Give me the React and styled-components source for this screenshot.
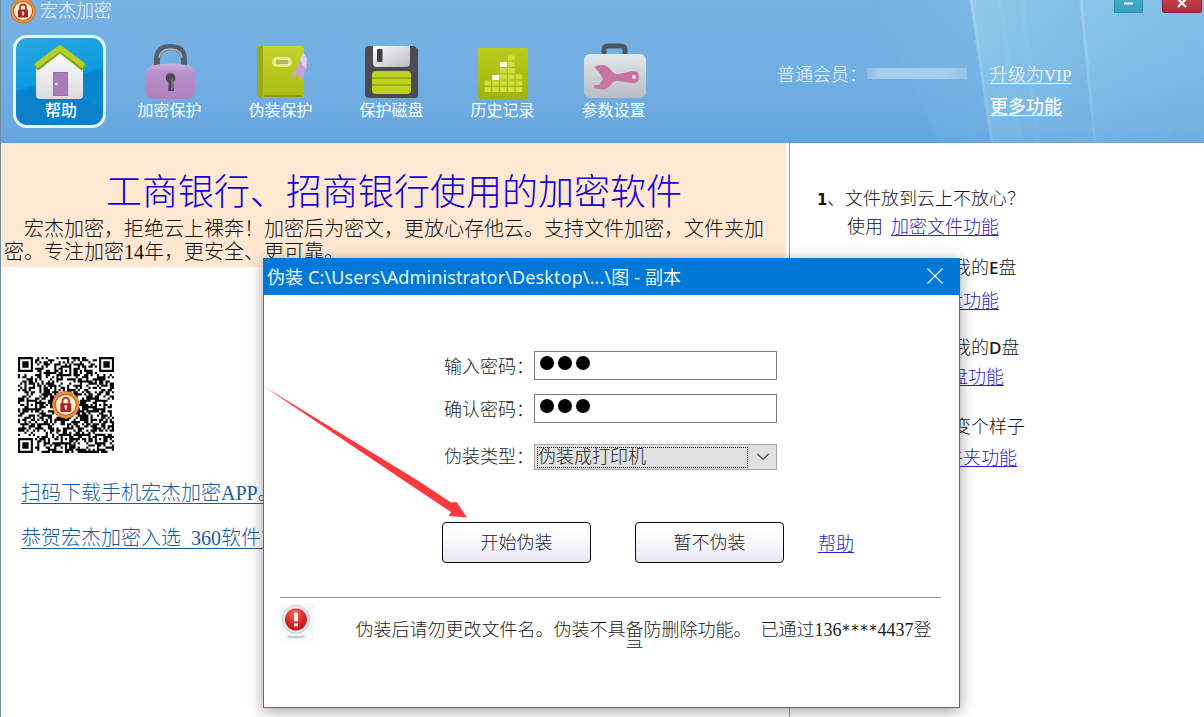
import React, { useState } from 'react';
import styled, { createGlobalStyle } from 'styled-components';

const GlobalStyle = createGlobalStyle`
  * {
    box-sizing: border-box;
  }

  body {
    margin: 0;
    overflow: hidden;
    background: #fff;
    font-family: 'Liberation Serif', 'Noto Sans CJK SC', sans-serif;
    font-weight: 300;
  }
`;

const Window = styled.div`
  position: relative;
  display: flex;
  flex-direction: column;
  width: 1204px;
  height: 717px;
  overflow: hidden;
  background: #fff;
  border-left: 1px solid #6f8f9f;
`;

const Header = styled.header`
  position: relative;
  height: 143px;
  flex: none;
  background: linear-gradient(#76b1e3 0%, #73afe2 45%, #68a8df 92%, #62a6e4 98%, #5f9dd4 100%);
`;

const Streaks = styled.svg`
  position: absolute;
  top: 0;
  right: 0;
`;

const TitleBar = styled.div`
  position: relative;
  display: flex;
  align-items: flex-start;
  height: 35px;
  padding-left: 9px;
`;

const AppName = styled.span`
  flex: 1;
  margin-left: 4px;
  color: #eef8ff;
  font-size: 18px;
  line-height: 22px;
`;

const MinimizeButton = styled.button`
  display: flex;
  justify-content: center;
  width: 29px;
  height: 13px;
  margin-right: 19px;
  padding: 2px 0 0;
  border: 1px solid #2c8fb0;
  border-top: 0;
  background: linear-gradient(#43a9c4, #38a3c4);
`;

const CloseButton = styled(MinimizeButton)`
  width: 40px;
  margin-right: 2px;
  padding: 0;
  border-color: #8c2231;
  border-radius: 0 0 3px 3px;
  background: linear-gradient(#c9404a, #ab2b3c);
`;

const HeaderRow = styled.div`
  position: relative;
  display: flex;
  justify-content: space-between;
`;

const Toolbar = styled.nav`
  display: flex;
  gap: 18px;
  padding-left: 12px;
`;

const ToolButton = styled.div`
  display: flex;
  flex-direction: column;
  align-items: center;
  width: 93px;
  height: 93px;
  border-radius: 14px;
  border: 3px solid ${({ $active }) => ($active ? '#e9f6ff' : 'transparent')};
  background: ${({ $active }) =>
    $active
      ? 'radial-gradient(ellipse 120px 60px at 30% 105%, #0a7fca 0 60%, transparent 61%), linear-gradient(165deg, #2aa6e0 0%, #0c9ce0 46%, #0683cd 50%, #0a8cd6 100%)'
      : 'none'};
  background-clip: padding-box;
`;

const ToolIcon = styled.svg`
  width: 87px;
  height: 63px;
  flex: none;
`;

const ToolLabel = styled.span`
  margin-left: ${({ $active }) => ($active ? '3px' : '-2px')};
  color: #f4fbff;
  font-size: 16px;
  font-weight: ${({ $active }) => ($active ? 500 : 400)};
  line-height: 19px;
  white-space: nowrap;
`;

const Member = styled.div`
  display: grid;
  grid-template-columns: 90px 123px auto;
  align-content: start;
  width: 427px;
  padding-top: 29px;
  row-gap: 9px;
  color: #e9f5ff;
  font-size: 18px;
  line-height: 22px;
`;

const MaskedName = styled.span`
  width: 100px;
  height: 11px;
  margin-top: 4px;
  background: linear-gradient(90deg, #8bbde8, #a9cdee 12%, #a9cdee 80%, #92c2ea);
`;

const Link = styled.a`
  text-decoration: underline 1px;
  text-underline-offset: 2px;
  text-decoration-skip-ink: none;
`;

const HeaderLink = styled(Link)`
  grid-column: 3;
  justify-self: start;
  color: #f2faff;
  font-weight: ${({ $bold }) => ($bold ? 500 : 300)};
`;

const Vip = styled.span`
  font-size: 17px;
`;

const Content = styled.main`
  display: flex;
  flex: 1;
`;

const LeftPane = styled.section`
  width: 789px;
  padding-right: 3px;
  border-right: 1px solid #9a9aa4;
`;

const Banner = styled.div`
  height: 124px;
  padding: 27px 0 0 3px;
  background: #fee8d2;
`;

const BannerTitle = styled.h1`
  margin: 0 0 2px 102px;
  color: #1400d8;
  font-size: 36px;
  font-weight: 300;
  line-height: 46px;
  white-space: nowrap;
`;

const BannerText = styled.p`
  margin: 0;
  color: #111;
  font-size: 20px;
  line-height: 23px;
  text-indent: 20px;
  white-space: nowrap;
`;

const QrCode = styled.svg`
  display: block;
  margin: 90px 0 0 17px;
`;

const PromoLink = styled.a`
  display: table;
  margin: ${({ $top }) => $top}px 0 0 20px;
  color: #1b5c9f;
  border-bottom: 1px solid #1b5c9f;
  font-size: 20px;
  line-height: 19px;
  white-space: pre;
`;

const RightPane = styled.aside`
  flex: 1;
  padding: 45px 0 0 27px;
`;

const Tip = styled.div`
  height: ${({ $height }) => $height}px;
  color: #151515;
  font-size: 18px;
  line-height: 22px;
  white-space: nowrap;
`;

const TipNumber = styled.b`
  display: inline-block;
  width: 10px;
  font: bold 15px/22px 'DejaVu Sans', sans-serif;
`;

const Letter = styled.span`
  font-family: 'Noto Sans', sans-serif;
  font-size: 17px;
  font-weight: 500;
`;

const TipAction = styled.div`
  display: flex;
  gap: ${({ $gap }) => $gap || 8}px;
  margin-top: ${({ $top }) => $top}px;
  padding-left: 30px;
`;

const BlueLink = styled(Link)`
  color: #2a1fc4;
  font-size: 18px;
`;

const Dialog = styled.div`
  position: absolute;
  left: 262px;
  top: 258px;
  width: 697px;
  height: 450px;
  border: 1px solid #1c7fb8;
  background: #fff;
  box-shadow: 0 3px 14px rgba(0, 0, 0, 0.38);
`;

const DialogTitle = styled.div`
  display: flex;
  align-items: center;
  justify-content: space-between;
  height: 37px;
  margin: -1px -1px 0;
  padding: 0 17px 2px 4px;
  background: #0078d7;
  color: #e8f5ff;
  font-family: 'Noto Sans', 'Noto Sans CJK SC', sans-serif;
  font-size: 18px;
  font-weight: 400;
  letter-spacing: 0.12px;
  white-space: pre;
`;

const Form = styled.div`
  display: grid;
  grid-template-columns: 90px 243px;
  grid-template-rows: 43px 50px 26px;
  align-items: start;
  padding: 56px 0 0 180px;
`;

const Label = styled.label`
  color: #222;
  font-size: 18px;
  line-height: ${({ $height }) => $height || 33}px;
  white-space: nowrap;
`;

const PasswordField = styled.div`
  display: flex;
  gap: 4px;
  height: 29px;
  padding: 4px 0 0 5px;
  border: 1px solid #7a7a7a;
`;

const Dot = styled.span`
  width: 14px;
  height: 14px;
  border-radius: 50%;
  background: #000;
`;

const Select = styled.div`
  display: flex;
  align-items: center;
  height: 26px;
  padding-left: 2px;
  border: 1px solid #a5a5a5;
  background: #e1e1e1;
`;

const SelectValue = styled.span`
  width: 211px;
  height: 21px;
  margin-right: 8px;
  border: 1px dotted #111;
  color: #222;
  font-size: 18px;
  line-height: 18px;
`;

const Actions = styled.div`
  display: flex;
  align-items: center;
  margin: 52px 0 0 178px;
`;

const ActionButton = styled.button`
  width: 149px;
  height: 41px;
  margin-right: ${({ $gap }) => $gap}px;
  padding: 0 0 3px;
  border: 1px solid #0c0c14;
  border-radius: 4px;
  background: linear-gradient(#fff 20%, #e9e7f4);
  color: #222;
  font: inherit;
  font-size: 18px;
`;

const HelpLink = styled(BlueLink)`
  margin-bottom: 2px;
`;

const Divider = styled.hr`
  height: 1px;
  margin: 34px 18px 0 16px;
  border: 0;
  background: #969696;
`;

const Notice = styled.div`
  display: flex;
  padding: 5px 0 0 16px;
`;

const NoticeText = styled.p`
  width: 577px;
  height: 27px;
  margin: 18px 0 0 41px;
  overflow: hidden;
  color: #1a1a1a;
  font-size: 18px;
  line-height: 19px;
  text-align: center;
  white-space: pre;
`;

const Stars = styled.span`
  font-family: 'DejaVu Sans Mono', monospace;
  font-size: 15px;
  line-height: 1;
`;

const Arrow = styled.svg`
  position: absolute;
  left: 0;
  top: 127px;
  pointer-events: none;
`;

const Badge = ({ x = 0, y = 0, size = 26 }) => (
  <svg x={x} y={y} width={size} height={size} viewBox="0 0 26 26">
    <circle cx="13" cy="13" r="12.5" fill="#cf6136" />
    <circle cx="13" cy="13" r="11" fill="none" stroke="#e79a3c" strokeWidth="1.6" />
    <circle cx="13" cy="13" r="9" fill="#fdf0c8" />
    <path d="M10 12V9.5a3 3 0 0 1 6 0V12" fill="none" stroke="#ad3c36" strokeWidth="1.8" />
    <rect x="8" y="11.5" width="10" height="8" rx="1" fill="#a82328" />
    <path d="M13 13.5v4M11.7 14.5h2.6" stroke="#fdf0c8" strokeWidth="1.6" />
  </svg>
);

// Icons are drawn in the 87x63 box above each toolbar label
const HouseIcon = () => (
  <ToolIcon viewBox="0 0 87 63">
    <defs>
      <linearGradient id="wall" x2="0" y2="1">
        <stop stopColor="#fff" />
        <stop offset="1" stopColor="#d9dbe0" />
      </linearGradient>
    </defs>
    <path d="M20 30 44 11l23 19v27q0 4-4 4H24q-4 0-4-4z" fill="url(#wall)" />
    <path d="m20 30 24-19 24 19" fill="none" stroke="#80a524" strokeWidth="7" strokeLinejoin="round" />
    <path d="m20 28 24-18 24 18" fill="none" stroke="#b5ce22" strokeWidth="5.5" strokeLinejoin="round" />
    <rect x="37" y="34" width="15" height="24" fill="#a97bb9" />
    <rect x="37.5" y="34.5" width="14" height="23" fill="none" stroke="#9870ad" />
    <circle cx="40.5" cy="46" r="1.3" fill="#fff" />
  </ToolIcon>
);

const LockIcon = () => (
  <ToolIcon viewBox="0 0 87 63">
    <defs>
      <linearGradient id="lock" x2="0" y2="1">
        <stop stopColor="#d1b5de" />
        <stop offset=".25" stopColor="#b690cb" />
        <stop offset="1" stopColor="#b37fbd" />
      </linearGradient>
    </defs>
    <path d="M30 31V22q0-13 13.5-13T57 22v9" fill="none" stroke="#535f6b" strokeWidth="6" />
    <path d="M32 20q1-9 11.5-9T55 20" fill="none" stroke="#a5b3bc" strokeWidth="1.4" />
    <path d="M28 27q15-3 31 0 9 1 9 11v13q0 10-10 10H28q-10 0-10-10V38q0-10 10-11z" fill="url(#lock)" />
    <circle cx="43.5" cy="40" r="4.8" fill="#4d4653" />
    <path d="M42 42h4l1 11h-6z" fill="#4d4653" />
    <path d="M45 40v12" stroke="#8d8292" strokeWidth="1.3" />
  </ToolIcon>
);

const BookIcon = () => (
  <ToolIcon viewBox="0 0 87 63">
    <defs>
      <linearGradient id="book" x2="0" y2="1">
        <stop stopColor="#c5d42b" />
        <stop offset="1" stopColor="#a9bd10" />
      </linearGradient>
    </defs>
    <rect x="19" y="8" width="47" height="52" rx="3" fill="url(#book)" />
    <path d="M22 8h3v52h-3q-3 0-3-3V11q0-3 3-3z" fill="#98aa18" />
    <path d="M26 58h38" stroke="#889c10" strokeWidth="2" />
    <rect x="34" y="19" width="20" height="10" rx="5" fill="#e5ea8c" />
    <path d="M38 23h12M38 25h12" stroke="#7d8a28" />
    <path d="m66 17 3 12-6 14-3-6-7 2 9-15z" fill="#c7a3d5" />
    <path d="m65 15 4 5-1 11-6-9z" fill="#e2cfee" />
  </ToolIcon>
);

const FloppyIcon = () => (
  <ToolIcon viewBox="0 0 87 63">
    <defs>
      <linearGradient id="shutter" x2="1" y2="1">
        <stop stopColor="#fff" />
        <stop offset="1" stopColor="#b7b9bd" />
      </linearGradient>
    </defs>
    <path d="M20 8h45l4 3v46q0 3-3 3H20q-4 0-4-4V12q0-4 4-4z" fill="#4b4c50" />
    <path d="M24 8h37v17q0 4-4 4H28q-4 0-4-4z" fill="url(#shutter)" />
    <rect x="28" y="11" width="5.5" height="13" rx="1" fill="#404146" />
    <rect x="23" y="33" width="39" height="23" rx="4" fill="#c0d021" />
    <path d="M23 40h39M23 47h39" stroke="#9cae18" strokeWidth="2" />
  </ToolIcon>
);

const bars = [2, 2, 4, 6, 3];

const HistoryIcon = () => (
  <ToolIcon viewBox="0 0 87 63">
    <defs>
      <linearGradient id="history" x2="0" y2="1">
        <stop stopColor="#bacd1c" />
        <stop offset="1" stopColor="#a0b00f" />
      </linearGradient>
    </defs>
    <rect x="18" y="10" width="50" height="51" rx="3" fill="url(#history)" />
    {bars.map((count, col) =>
      Array.from({ length: count }, (_, row) => (
        <rect key={`${col}-${row}`} x={24.5 + col * 7.8} y={49 - row * 6.3} width="6.6" height="5" fill="#d0de41" />
      ))
    )}
    <rect x="32.3" y="37" width="7" height="5" fill="#fff" />
    <rect x="40" y="24" width="7" height="5" fill="#fff" />
  </ToolIcon>
);

const CaseIcon = () => (
  <ToolIcon viewBox="0 0 87 63">
    <defs>
      <linearGradient id="case" x2="0" y2="1">
        <stop stopColor="#e2e6e6" />
        <stop offset="1" stopColor="#b8bec4" />
      </linearGradient>
    </defs>
    <path d="M33 18v-6q0-4 4-4h13q4 0 4 4v6" fill="none" stroke="#4c565f" strokeWidth="5" />
    <rect x="13" y="16" width="62" height="44" rx="6" fill="url(#case)" />
    <path
      d="M23 29q11-5 17 3 3 5 8 4l13-3q7-1 7 6t-7 6l-13-2q-5-1-8 4-6 7-17 3v-3h5l4-6-4-7z"
      fill="#c7759f"
    />
    <circle cx="63" cy="39" r="2" fill="#f8e8f1" />
  </ToolIcon>
);

const AlertIcon = () => (
  <svg width="34" height="38" viewBox="0 0 34 38">
    <defs>
      <radialGradient id="alert" cx=".45" cy=".25" r=".8">
        <stop stopColor="#f26a60" />
        <stop offset=".6" stopColor="#dc2226" />
        <stop offset="1" stopColor="#b81a1e" />
      </radialGradient>
    </defs>
    <rect width="34" height="38" fill="#f3f9fd" />
    <ellipse cx="16" cy="34" rx="9" ry="1.3" fill="#c5ccce" />
    <circle cx="16" cy="16.5" r="14" fill="#e6e7e8" stroke="#cbcfd2" />
    <circle cx="16" cy="16.500" r="11" fill="url(#alert)" />
    <rect x="14.2" y="9.500" width="3.6" height="9" fill="#fff" />
    <rect x="14.2" y="20.500" width="3.6" height="3" fill="#fff" />
  </svg>
);

const tools = [
  { label: '帮助', Icon: HouseIcon, active: true },
  { label: '加密保护', Icon: LockIcon },
  { label: '伪装保护', Icon: BookIcon },
  { label: '保护磁盘', Icon: FloppyIcon },
  { label: '历史记录', Icon: HistoryIcon },
  { label: '参数设置', Icon: CaseIcon },
];

// 45x45 module code with three finders and the alignment marks
const SIZE = 45;

const ring = (x, y, cx, cy, r) => {
  const d = Math.max(Math.abs(x - cx), Math.abs(y - cy));
  if (d > r + (r === 3 ? 1 : 0)) return null;
  return r === 3 ? d === 3 || d < 2 : d !== 1;
};

const buildQr = () => {
  let seed = 20147;
  let path = '';
  const marks = [[3, 3, 3], [41, 3, 3], [3, 41, 3], [22, 6, 2], [6, 22, 2], [38, 22, 2], [22, 38, 2], [38, 38, 2]];
  for (let y = 0; y < SIZE; y++) {
    for (let x = 0; x < SIZE; x++) {
      seed = (seed * 1103515245 + 12345) % 2147483648;
      let on = seed / 2147483648 > 0.47;
      marks.forEach(([cx, cy, r]) => {
        const hit = ring(x, y, cx, cy, r);
        if (hit !== null) on = hit;
      });
      if (on) path += `M${x} ${y}h1v1h-1z`;
    }
  }
  return path;
};

const qrPath = buildQr();

const App = () => {
  const [open, setOpen] = useState(true);

  return (
    <Window>
      <GlobalStyle />
      <Header>
        <Streaks width="404" height="143" viewBox="800 0 404 143">
          <defs>
            <linearGradient id="glow" x1="0" x2="1">
              <stop stopColor="#8fcbe8" stopOpacity="0" />
              <stop offset=".45" stopColor="#8fcbe8" stopOpacity=".35" />
              <stop offset="1" stopColor="#8fcbe8" stopOpacity=".5" />
            </linearGradient>
            <linearGradient id="beam" x1="0" x2="1">
              <stop stopColor="#a5daf0" stopOpacity=".55" />
              <stop offset="1" stopColor="#8fcbe8" stopOpacity=".1" />
            </linearGradient>
            <linearGradient id="fade" x2="0" y2="1">
              <stop stopColor="#fff" />
              <stop offset="1" stopColor="#fff" stopOpacity=".5" />
            </linearGradient>
            <mask id="fadeMask">
              <rect x="800" width="404" height="143" fill="url(#fade)" />
            </mask>
          </defs>
          <g mask="url(#fadeMask)">
            <path d="M870 0h334v143H940z" fill="url(#glow)" />
            <path d="M971 0h109l20 143H992z" fill="url(#beam)" />
            <path d="M1080 0h110l-20 143h-73z" fill="url(#beam)" opacity=".6" />
            <path d="m971 0 21 143M1081 0l14 143" stroke="#a9dcf1" strokeWidth="3" opacity=".6" />
            <path d="m1000 0 20 143M1022 0l16 143" stroke="#a9dcf1" strokeWidth="5" opacity=".15" />
          </g>
        </Streaks>
        <TitleBar>
          <svg width="26" height="25" viewBox="0 0 26 25">
            <Badge y={-2} />
          </svg>
          <AppName>宏杰加密</AppName>
          <MinimizeButton aria-label="minimize">
            <svg width="11" height="4"><path d="M1 1.5h9" stroke="#fff" strokeWidth="2" /></svg>
          </MinimizeButton>
          <CloseButton aria-label="close">
            <svg width="12" height="9"><path d="m2-1 8 8m0-8-8 8" stroke="#fff" strokeWidth="2.2" /></svg>
          </CloseButton>
        </TitleBar>
        <HeaderRow>
          <Toolbar>
            {tools.map(({ label, Icon, active }) => (
              <ToolButton key={label} $active={active}>
                <Icon />
                <ToolLabel $active={active}>{label}</ToolLabel>
              </ToolButton>
            ))}
          </Toolbar>
          <Member>
            <span>普通会员：</span>
            <MaskedName />
            <HeaderLink>升级为<Vip>VIP</Vip></HeaderLink>
            <HeaderLink $bold>更多功能</HeaderLink>
          </Member>
        </HeaderRow>
      </Header>

      <Content>
        <LeftPane>
          <Banner>
            <BannerTitle>工商银行、招商银行使用的加密软件</BannerTitle>
            <BannerText>
              宏杰加密，拒绝云上裸奔！加密后为密文，更放心存他云。支持文件加密，文件夹加
              <br />
              密。专注加密14年，更安全、更可靠。
            </BannerText>
          </Banner>
          <QrCode width="96" height="96" viewBox="0 0 45 45">
            <path d={qrPath} fill="#080808" />
            <Badge x={15.7} y={15.7} size={13.4} />
          </QrCode>
          <PromoLink $top={31}>扫码下载手机宏杰加密APP。</PromoLink>
          <PromoLink $top={25}>恭贺宏杰加密入选  360软件管家</PromoLink>
        </LeftPane>

        <RightPane>
          <Tip $height={69}>
            <TipNumber>1</TipNumber>、文件放到云上不放心？
            <TipAction $top={5}>使用<BlueLink>加密文件功能</BlueLink></TipAction>
          </Tip>
          <Tip $height={80}>
            <TipNumber>2</TipNumber>、不让别人看到我的<Letter>E</Letter>盘
            <TipAction $top={10}>使用<BlueLink>隐藏磁盘功能</BlueLink></TipAction>
          </Tip>
          <Tip $height={79}>
            <TipNumber>3</TipNumber>、禁止别人使用我的<Letter>D</Letter>盘
            <TipAction $top={6} $gap={13}>使用<BlueLink>禁用磁盘功能</BlueLink></TipAction>
          </Tip>
          <Tip $height={80}>
            <TipNumber>4</TipNumber>、我想让文件夹变个样子
            <TipAction $top={8}>使用<BlueLink>伪装文件夹功能</BlueLink></TipAction>
          </Tip>
        </RightPane>
      </Content>

      {open && (
        <Dialog>
          <DialogTitle>
            <span>{'伪装 C:\\Users\\Administrator\\Desktop\\...\\图 - 副本'}</span>
            <svg width="16" height="16" onClick={() => setOpen(false)}>
              <path d="m.5.5 15 15m0-15-15 15" stroke="#e8f5ff" strokeWidth="1.3" />
            </svg>
          </DialogTitle>
          <Form>
            <Label>输入密码：</Label>
            <PasswordField><Dot /><Dot /><Dot /></PasswordField>
            <Label>确认密码：</Label>
            <PasswordField><Dot /><Dot /><Dot /></PasswordField>
            <Label $height={26}>伪装类型：</Label>
            <Select>
              <SelectValue>伪装成打印机</SelectValue>
              <svg width="14" height="8">
                <path d="m1.5 1 5.5 5.5L12.5 1" fill="none" stroke="#444" strokeWidth="1.2" />
              </svg>
            </Select>
          </Form>
          <Actions>
            <ActionButton $gap={44}>开始伪装</ActionButton>
            <ActionButton $gap={34} onClick={() => setOpen(false)}>暂不伪装</ActionButton>
            <HelpLink>帮助</HelpLink>
          </Actions>
          <Divider />
          <Notice>
            <AlertIcon />
            <NoticeText>
              {'伪装后请勿更改文件名。伪装不具备防删除功能。\u00a0 已通过136'}
              <Stars>****</Stars>
              {'4437登\n录\u00a0\u00a0\u00a0\u00a0'}
            </NoticeText>
          </Notice>
          <Arrow width="206" height="134" viewBox="0 0 206 134">
            <path d="M0 .5 153 94 187 116.5 192.5 116 203 131.5 184.5 130 187 126 139 94z" fill="#f83a3c" />
          </Arrow>
        </Dialog>
      )}
    </Window>
  );
};

export default App;
